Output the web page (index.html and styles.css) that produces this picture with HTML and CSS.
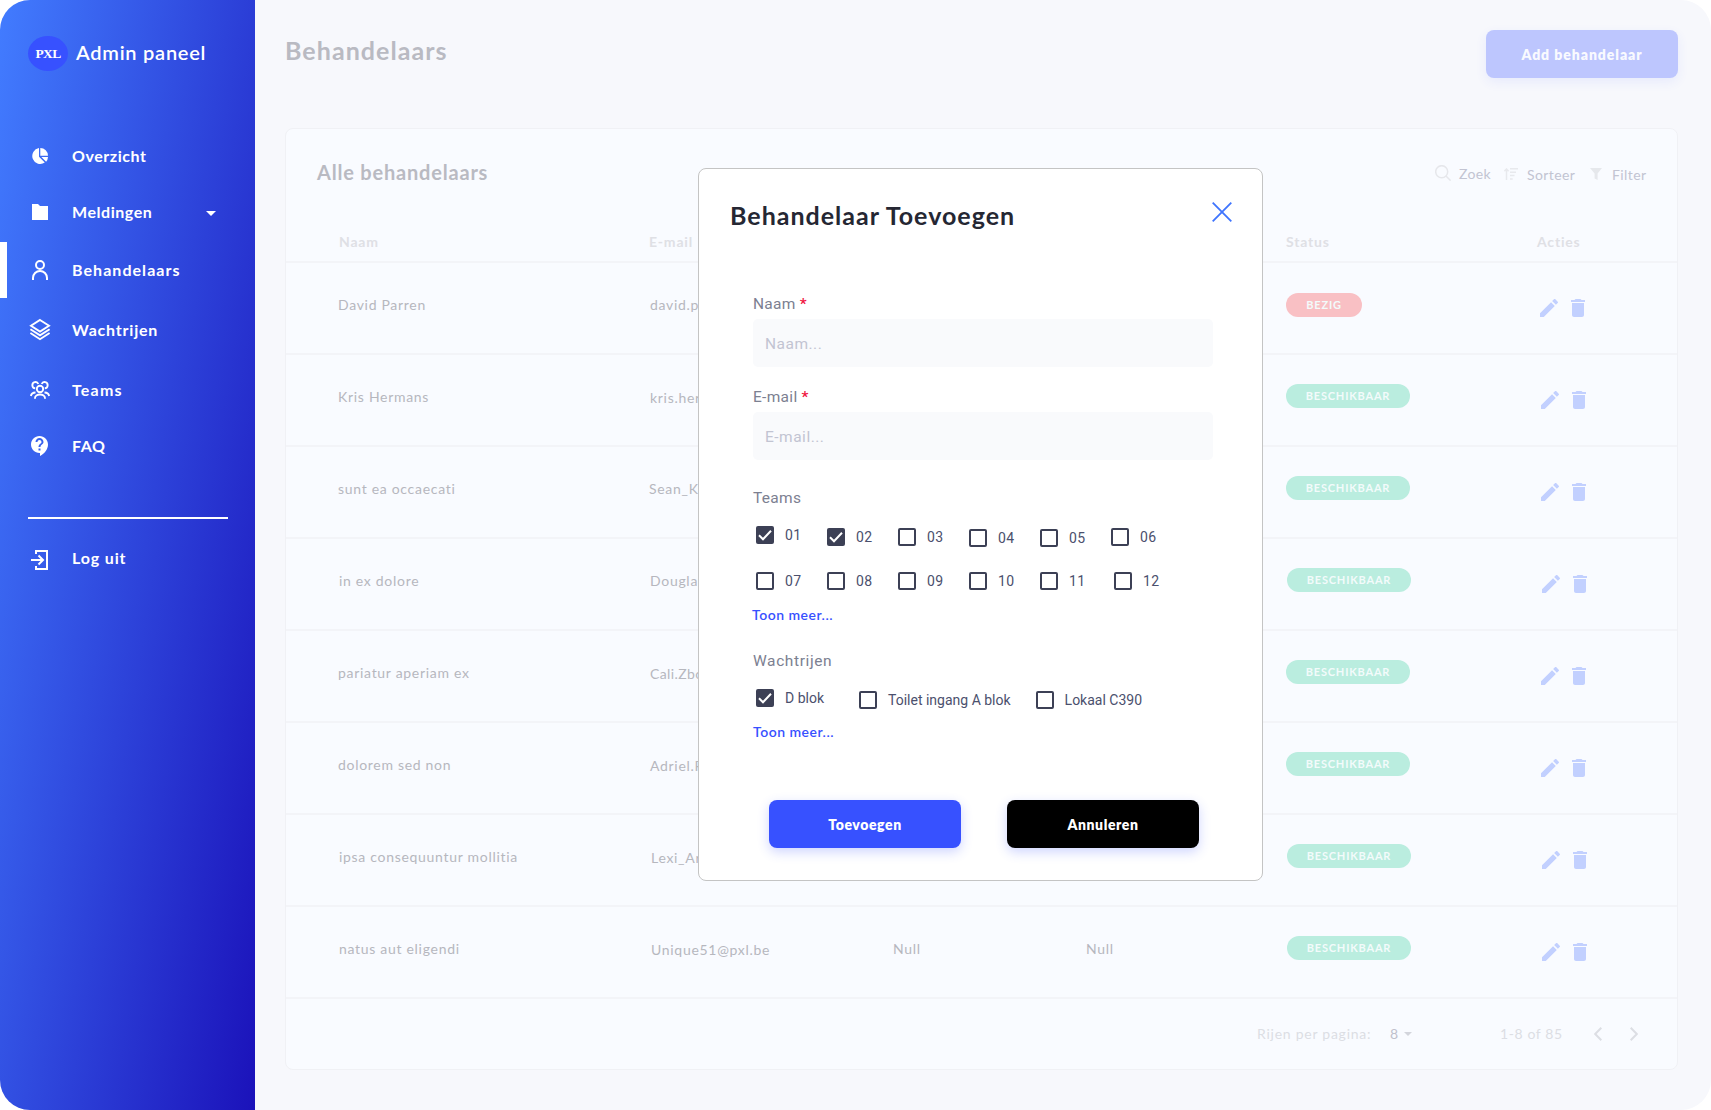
FILE: index.html
```html
<!DOCTYPE html>
<html lang="nl">
<head>
<meta charset="utf-8">
<title>Admin paneel - Behandelaars</title>
<link rel="stylesheet" href="styles.css">
</head>
<body>
<svg class="defs" width="0" height="0" aria-hidden="true">
  <symbol id="edit" viewBox="3 3 18 18"><path d="M3 17.25V21h3.75L17.81 9.94l-3.75-3.75L3 17.25zM20.71 7.04c.39-.39.39-1.02 0-1.41l-2.34-2.34c-.39-.39-1.02-.39-1.41 0l-1.83 1.83 3.75 3.75 1.83-1.83z"/></symbol>
  <symbol id="trash" viewBox="5 3 14 18"><path d="M6 19c0 1.1.9 2 2 2h8c1.1 0 2-.9 2-2V7H6v12zM19 4h-3.5l-1-1h-5l-1 1H5v2h14V4z"/></symbol>
  <symbol id="check" viewBox="0 0 18 18"><path d="M3 9.2l4 4 8-8.4" fill="none" stroke="#fff" stroke-width="2"/></symbol>
</svg>
<div class="app">
  <aside class="sidebar">
    <div class="brand"><span class="logo">PXL</span><span class="brand-name">Admin paneel</span></div>
    <nav class="nav">
      <a class="item overzicht"><svg class="icon" viewBox="0 0 24 24"><path fill="#fff" d="M11 4.100A8 8 0 1 0 16.800 18.600L11 12.800zM12.300 4v7.700H20A7.700 7.700 0 0 0 12.300 4zM13.400 13l4.700 4.700A7.600 7.600 0 0 0 20 13z"/></svg><span>Overzicht</span></a>
      <a class="item meldingen"><svg class="icon" viewBox="0 0 24 24"><path fill="#fff" d="M4 4h6l2 2h8v14H4z"/></svg><span>Meldingen</span><svg class="caret" viewBox="0 0 10 5"><path fill="#fff" d="M0 0h10L5 5z"/></svg></a>
      <a class="item behandelaars active"><svg class="icon" viewBox="0 0 24 24" fill="none" stroke="#fff" stroke-width="2"><circle cx="12" cy="7" r="4"/><path d="M5 22v-2a7 7 0 0 1 14 0v2"/></svg><span>Behandelaars</span></a>
      <a class="item wachtrijen"><svg class="icon" viewBox="0 0 24 24" fill="none" stroke="#fff" stroke-width="1.9"><path d="M12 2l9 5.800-9 5.800-9-5.800zM2.400 11.200l9.600 6.200 9.600-6.200M2.400 15l9.600 6.200L21.600 15"/></svg><span>Wachtrijen</span></a>
      <a class="item teams"><svg class="icon" viewBox="0 0 24 24" fill="none" stroke="#fff" stroke-width="1.9"><circle cx="12" cy="11" r="3.2"/><path d="M7 20.800v-.6a5 3.700 0 0 1 10 0v.6M7.200 10.300A3.100 3.100 0 1 1 10.300 6M16.800 10.300A3.100 3.100 0 1 0 13.700 6M2.900 18a5 4 0 0 1 4.600-3.500M21.100 18a5 4 0 0 0-4.600-3.500"/></svg><span>Teams</span></a>
      <a class="item faq"><svg class="icon" viewBox="0 0 24 24"><path fill="#fff" d="M11.500 2C6.810 2 3 5.810 3 10.500S6.810 19 11.500 19h.5v3c4.860-2.340 8-7 8-11.500C20 5.810 16.190 2 11.500 2zm1 14.500h-2v-2h2v2zm0-3.500h-2c0-3.250 3-3 3-5 0-1.100-.9-2-2-2s-2 .9-2 2h-2c0-2.210 1.790-4 4-4s4 1.790 4 4c0 2.500-3 2.750-3 5z"/></svg><span>FAQ</span></a>
    </nav>
    <hr class="divider">
    <a class="item logout"><svg class="icon" viewBox="0 0 24 24" fill="none" stroke="#fff" stroke-width="2"><path d="M8 6V3h11v18H8v-3M3 12h12M10.500 7.500L15 12l-4.500 4.500"/></svg><span>Log uit</span></a>
  </aside>

  <main class="main">
    <header class="topbar"><h1>Behandelaars</h1><button class="btn add">Add behandelaar</button></header>
    <section class="card">
      <div class="card-head">
        <h2>Alle behandelaars</h2>
        <div class="tools">
          <svg class="t-search" viewBox="0 0 16 16" fill="none" stroke="#e6e7eb" stroke-width="1.500"><circle cx="6.700" cy="6.700" r="6"/><path d="M11 11l4.600 4.600"/></svg><span class="zoek">Zoek</span>
          <svg class="t-sort" viewBox="0 0 14 12" fill="none" stroke="#e8e9ed" stroke-width="1.500"><path d="M2.500 12V1M.4 3.200L2.500 1l2.100 2.200M6 .8h8M6 4.200h6M6 7.600h4.500M6 11h2.700"/></svg><span class="sorteer">Sorteer</span>
          <svg class="t-filter" viewBox="0 0 12 12"><path fill="#e6e8ec" d="M0 0h12L7.600 5.600V12L4.600 10.600V5.600z"/></svg><span class="filter">Filter</span>
        </div>
      </div>
      <div class="row head"><span>Naam</span><span>E-mail</span><span></span><span></span><span>Status</span><span>Acties</span></div>
      <div class="row first"><span>David Parren</span><span>david.p</span><span></span><span></span><span class="badge busy">BEZIG</span><span class="actions"><svg class="edit"><use href="#edit"/></svg><svg class="trash"><use href="#trash"/></svg></span></div>
      <div class="row low"><span>Kris Hermans</span><span>kris.her</span><span></span><span></span><span class="badge">BESCHIKBAAR</span><span class="actions"><svg class="edit"><use href="#edit"/></svg><svg class="trash"><use href="#trash"/></svg></span></div>
      <div class="row near"><span>sunt ea occaecati</span><span>Sean_K</span><span></span><span></span><span class="badge">BESCHIKBAAR</span><span class="actions"><svg class="edit"><use href="#edit"/></svg><svg class="trash"><use href="#trash"/></svg></span></div>
      <div class="row shift near"><span>in ex dolore</span><span>Dougla</span><span></span><span></span><span class="badge">BESCHIKBAAR</span><span class="actions"><svg class="edit"><use href="#edit"/></svg><svg class="trash"><use href="#trash"/></svg></span></div>
      <div class="row low"><span>pariatur aperiam ex</span><span class="tight">Cali.Zbo</span><span></span><span></span><span class="badge">BESCHIKBAAR</span><span class="actions"><svg class="edit"><use href="#edit"/></svg><svg class="trash"><use href="#trash"/></svg></span></div>
      <div class="row low"><span>dolorem sed non</span><span>Adriel.F</span><span></span><span></span><span class="badge">BESCHIKBAAR</span><span class="actions"><svg class="edit"><use href="#edit"/></svg><svg class="trash"><use href="#trash"/></svg></span></div>
      <div class="row shift low"><span>ipsa consequuntur mollitia</span><span>Lexi_Ar</span><span></span><span></span><span class="badge">BESCHIKBAAR</span><span class="actions"><svg class="edit"><use href="#edit"/></svg><svg class="trash"><use href="#trash"/></svg></span></div>
      <div class="row shift low"><span>natus aut eligendi</span><span>Unique51@pxl.be</span><span>Null</span><span>Null</span><span class="badge">BESCHIKBAAR</span><span class="actions"><svg class="edit"><use href="#edit"/></svg><svg class="trash"><use href="#trash"/></svg></span></div>
      <footer class="pager">
        <span class="per">Rijen per pagina:</span><span class="count">8</span><svg class="p-caret" viewBox="0 0 8 4"><path fill="#d3d5dc" d="M0 0h8L4 4z"/></svg><span class="range">1-8 of 85</span>
        <svg class="chev prev" viewBox="0 0 8 14"><path d="M7.300.7L1.200 7l6.100 6.300"/></svg><svg class="chev" viewBox="0 0 8 14"><path d="M.7.7L6.800 7 .7 13.300"/></svg>
      </footer>
    </section>
  </main>
</div>

<div class="modal">
  <div class="modal-head"><h2>Behandelaar Toevoegen</h2><svg class="close" viewBox="0 0 20 20"><path d="M.7.7l18.600 18.600M19.300.7L.7 19.300"/></svg></div>
  <div class="form">
    <label class="label">Naam <b>*</b></label>
    <div class="input">Naam...</div>
    <label class="label second">E-mail <b>*</b></label>
    <div class="input">E-mail...</div>
    <div class="label teams-label">Teams</div>
    <div class="checks">
      <span class="check up"><svg class="box on"><use href="#check"/></svg>01</span><span class="check"><svg class="box on"><use href="#check"/></svg>02</span><span class="check"><i class="box"></i>03</span><span class="check down"><i class="box"></i>04</span><span class="check down"><i class="box"></i>05</span><span class="check"><i class="box"></i>06</span>
    </div>
    <div class="checks second-row">
      <span class="check"><i class="box"></i>07</span><span class="check"><i class="box"></i>08</span><span class="check"><i class="box"></i>09</span><span class="check"><i class="box"></i>10</span><span class="check"><i class="box"></i>11</span><span class="check nudge"><i class="box"></i>12</span>
    </div>
    <a class="more">Toon meer...</a>
    <div class="label queue-label">Wachtrijen</div>
    <div class="queues">
      <span class="check up"><svg class="box on"><use href="#check"/></svg>D blok</span><span class="check"><i class="box"></i>Toilet ingang A blok</span><span class="check"><i class="box"></i>Lokaal C390</span>
    </div>
    <a class="more last">Toon meer...</a>
    <div class="buttons"><button class="btn">Toevoegen</button><button class="btn dark">Annuleren</button></div>
  </div>
</div>
</body>
</html>
```
FILE: styles.css
```css
* { box-sizing: border-box; }
body { margin: 0; background: #fff; font-family: Lato, sans-serif; }
h1, h2 { margin: 0; font-weight: 700; }
svg { display: block; flex: none; }
span { white-space: nowrap; }
.defs { position: absolute; }

.app { display: flex; width: 1711px; height: 1110px; border-radius: 30px; overflow: hidden; background: #f7f8fc; }

/* Sidebar */
.sidebar { width: 255px; flex: none; background: linear-gradient(99deg, #427cff 0%, #1b12ba 100%); color: #fff; }
.brand { display: flex; align-items: center; gap: 8px; padding: 36px 0 0 28px; height: 71px; }
.logo { display: flex; align-items: center; justify-content: center; width: 40px; height: 35px; border-radius: 50%; background: #3751ff; font: bold 13.500px "Liberation Serif", serif; padding-top: 1px; letter-spacing: -.6px; }
.brand-name { padding-bottom: 3px; font-size: 20px; font-weight: 600; letter-spacing: .75px; }
.nav { padding-top: 57px; }
.item { display: flex; align-items: center; height: 56px; padding-left: 28px; font-size: 16px; font-weight: 700; letter-spacing: .55px; }
.item span { padding-bottom: 2px; }
.icon { width: 24px; height: 24px; margin-right: 20px; }
.caret { width: 10px; height: 5px; margin: 3px 0 0 auto; }
.meldingen { padding-right: 39px; }
.active { border-left: 7px solid #fff; padding-left: 21px; }
.behandelaars { margin-top: 2px; letter-spacing: 1.050px; }
.wachtrijen { margin-top: 4px; letter-spacing: .8px; }
.teams { margin-top: 4px; letter-spacing: 1.200px; }
.divider { width: 200px; height: 2px; margin: 43px 0 0 28px; border: 0; background: #fff; }
.logout { margin-top: 12px; letter-spacing: .85px; }
.logout .icon { margin-top: 2px; }
.logout span { padding-bottom: 4px; }

/* Page content */
.main { flex: 1; padding: 30px 33px 0 30px; }
.topbar { display: flex; justify-content: space-between; height: 98px; }
h1 { font-size: 25px; line-height: 41px; color: #b9bac2; letter-spacing: 1.050px; }
.btn { width: 192px; height: 48px; padding: 2px 0 0; border: 0; border-radius: 8px; background: #3751ff; color: #fff; font: 800 14px/20px Lato, sans-serif; letter-spacing: .6px; box-shadow: 0 4px 12px rgba(55, 81, 255, .24); }
.add { background: #bdc6fe; color: #f9faff; letter-spacing: .95px; box-shadow: 0 4px 12px rgba(55, 81, 255, .08); }
.card { height: 942px; border: 1px solid #f0f1f5; border-radius: 8px; background: #f9fbff; color: #bdbec4; font-size: 14px; }
.card-head { display: flex; justify-content: space-between; height: 91px; padding: 32px 31px 0 31px; }
.card h2 { font-size: 20px; line-height: 22px; color: #b9bac2; letter-spacing: .8px; }
.tools { display: flex; height: 24px; line-height: 24px; color: #c2c4d2; letter-spacing: .4px; font-weight: 400; }
.t-search { width: 16px; height: 16px; margin: 4px 8px 0 0; }
.zoek { width: 45px; padding-top: 1px; }
.t-sort { width: 14px; height: 12px; margin: 7px 9px 0 0; }
.sorteer { width: 63px; padding-top: 2px; }
.t-filter { width: 12px; height: 12px; margin: 7px 10px 0 0; }
.filter { width: 34px; padding-top: 2px; }
.row { display: grid; grid-template-columns: 312px 242px 193px 201px 254px 1fr; height: 92px; padding: 32px 0 0 52px; border-bottom: 2px solid #f3f4f8; line-height: 20px; letter-spacing: .7px; align-items: start; font-weight: 400; color: #b6b7be; }
.row.head { height: 43px; padding: 12px 0 0 53px; grid-template-columns: 310px 244px 193px 200px 251px 1fr; color: #dfe0e5; font-weight: 700; letter-spacing: .8px; }
.row.shift { padding-left: 53px; }
.row.low > span:nth-child(2) { padding-top: 1px; }
.row.near > span:nth-child(2) { margin-left: -1px; }
.row .tight { width: 48px; overflow: hidden; letter-spacing: .4px; }
.row .badge { display: flex; justify-content: center; width: 124px; height: 24px; margin-top: -3px; border-radius: 12px; background: #baeddf; color: #f3fbfb; font-size: 11px; font-weight: 700; line-height: 24px; letter-spacing: .8px; }
.row .busy { width: 76px; margin-top: -2px; background: #f9c0c4; }
.actions { display: flex; gap: 13px; padding: 4px 0 0 1px; fill: #c2d0ff; }
.first .actions { padding-left: 0; }
.edit { width: 18px; height: 18px; }
.trash { width: 14px; height: 18px; }
.pager { display: flex; align-items: center; height: 70px; padding-left: 971px; color: #dcdee4; letter-spacing: .75px; }
.pager span { padding-bottom: 1px; }
.per { width: 133px; }
.count { width: 14px; color: #bfc1cc; }
.p-caret { width: 8px; height: 4px; margin-right: 88px; }
.range { width: 94px; letter-spacing: .6px; }
.chev { width: 8px; height: 14px; fill: none; stroke: #dcdee4; stroke-width: 2; }
.prev { margin-right: 28px; }

/* Dialog */
.modal { position: absolute; left: 698px; top: 168px; width: 565px; height: 713px; padding: 32px 30px 0 31px; border: 1px solid #c4c4c4; border-radius: 8px; background: #fff; }
.modal-head { display: flex; justify-content: space-between; height: 91px; }
.modal h2 { font-size: 25px; line-height: 28px; color: #252733; letter-spacing: 1px; }
.close { width: 20px; height: 20px; margin-top: 1px; fill: none; stroke: #3e74fe; stroke-width: 1.800; }
.form { padding: 0 19px 0 23px; font-family: Roboto, sans-serif; }
.label { display: block; height: 27px; line-height: 24px; color: #7c8091; font-size: 15.500px; letter-spacing: .3px; }
.label b { color: #f0153f; font-weight: 500; }
.second { margin-top: 18px; }
.input { height: 48px; padding-left: 12px; border-radius: 5px; background: #f9fafc; color: #c2c4d2; font-size: 15.500px; line-height: 51px; letter-spacing: .5px; }
.teams-label { margin-top: 26px; }
.checks, .queues { display: flex; padding-left: 3px; color: #4b506d; font-size: 14px; }
.checks { padding-top: 15px; height: 46px; letter-spacing: .3px; }
.second-row { padding-top: 13px; height: 46px; }
.check { display: flex; height: 18px; line-height: 18px; }
.checks .check { width: 71px; }
.check.up { margin-top: -2px; }
.check.down { margin-top: 1px; }
.check.nudge { margin-left: 3px; }
.box { width: 18px; height: 18px; margin-right: 11px; border: 2px solid #3c4055; border-radius: 2px; flex: none; }
.box.on { border: 0; background: #3c4055; }
.more { display: block; margin: 0 0 0 -1px; font: 600 14px/20px Lato, sans-serif; color: #3751ff; letter-spacing: .5px; }
.queue-label { margin-top: 24px; letter-spacing: .6px; }
.queues { height: 46px; padding-top: 15px; gap: 35px; }
.queues .check:nth-child(2) { margin-right: -10px; }
.more.last { margin-left: 0; }
.buttons { display: flex; justify-content: space-between; padding: 58px 14px 0 16px; }
.dark { background: #000; }
```
